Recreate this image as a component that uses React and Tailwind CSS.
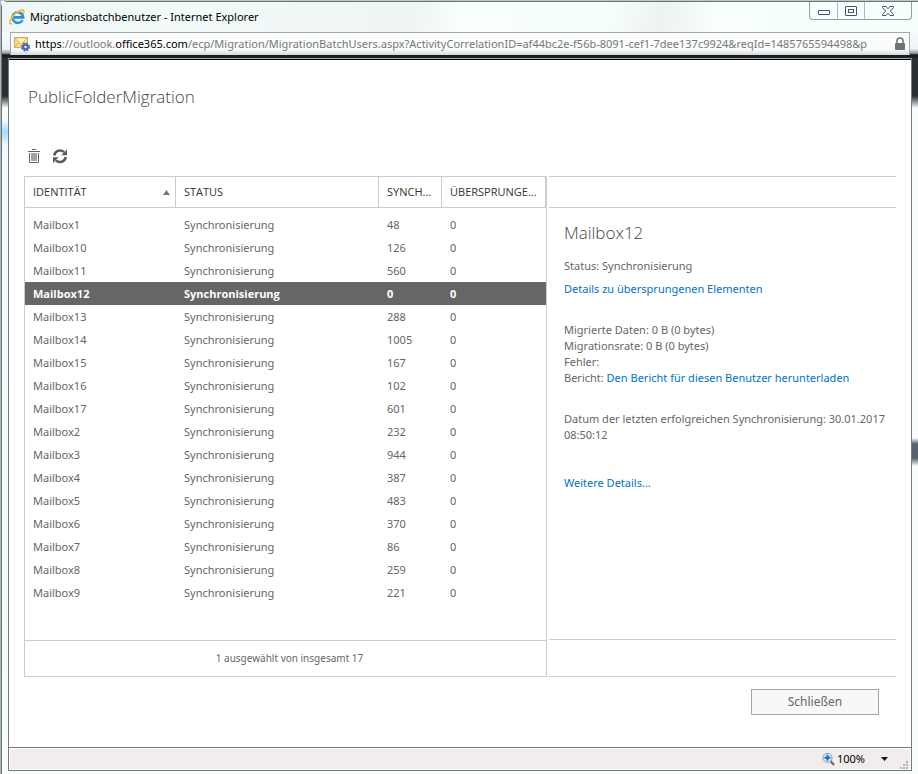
const rows = [
  ["Mailbox1", 48, 0],
  ["Mailbox10", 126, 0],
  ["Mailbox11", 560, 0],
  ["Mailbox12", 0, 0],
  ["Mailbox13", 288, 0],
  ["Mailbox14", 1005, 0],
  ["Mailbox15", 167, 0],
  ["Mailbox16", 102, 0],
  ["Mailbox17", 601, 0],
  ["Mailbox2", 232, 0],
  ["Mailbox3", 944, 0],
  ["Mailbox4", 387, 0],
  ["Mailbox5", 483, 0],
  ["Mailbox6", 370, 0],
  ["Mailbox7", 86, 0],
  ["Mailbox8", 259, 0],
  ["Mailbox9", 221, 0],
];

function BrowserIcon() {
  return (
    <svg className="size-4 shrink-0" viewBox="0 0 16 16" fill="none" aria-hidden="true">
      <path d="M13.6 11a5.3 5.3 0 1 1 .6-2.6H5" stroke="#2a8fd6" strokeWidth="2.6" />
      <path d="M13 10.6a4.8 4.8 0 0 1-8.6-1" stroke="#6cc4f2" strokeWidth="0.8" />
      <path d="M2.6 14.8C.6 15.2.2 13.4 1.6 10.6 3.6 6.4 9 1.4 13 1c2-.2 2.2 1.4 1.4 3.2" stroke="#f0b323" strokeWidth="1.5" strokeLinecap="round" />
      <path d="M2 10.8C4 7 8.8 2.4 12.6 1.4" stroke="#fbe08a" strokeWidth="0.6" />
    </svg>
  );
}

function MailGearIcon() {
  return (
    <svg className="size-4 shrink-0" viewBox="0 0 16 16" fill="none" aria-hidden="true">
      <rect x="0.5" y="1.5" width="13" height="10" fill="#f9dc85" stroke="#d6ac55" />
      <path d="M.5 11.5 5 6.500M13.5 11.5 9 6.500" stroke="#d6ac55" />
      <path d="M1 2h12L7 8Z" fill="#fff6cf" stroke="#d6ac55" strokeWidth="0.800" />
      <circle cx="11.500" cy="11" r="3.700" stroke="#3c5ba6" strokeWidth="1.600" strokeDasharray="1.700 1.200" />
      <circle cx="11.500" cy="11" r="2.300" fill="#dfe8fa" stroke="#4667b4" strokeWidth="2" />
    </svg>
  );
}

function LockIcon() {
  return (
    <svg className="h-[14px] w-[12px] shrink-0" viewBox="0 0 12 14" fill="none" aria-hidden="true">
      <path d="M3 7V4a3 3 0 0 1 6 0v3" stroke="#737373" strokeWidth="1.6" />
      <rect x="1" y="6" width="10" height="7" rx="0.8" fill="#737373" />
    </svg>
  );
}

function WindowButtons() {
  return (
    <div className="mr-[6px] flex h-[18px] w-[103px] self-start rounded-b-[4px] border border-t-0 border-[#959c9c]">
      <button aria-label="Minimieren" className="flex w-[28px] items-center justify-center border-r border-[#b3baba]">
        <svg className="h-[14px] w-[14px]" viewBox="0 0 14 14" aria-hidden="true">
          <rect x="1.5" y="6.5" width="11" height="4" rx="0.5" fill="#fff" stroke="#4c5066" />
        </svg>
      </button>
      <button aria-label="Maximieren" className="flex w-[27px] items-center justify-center border-r border-[#b3baba]">
        <svg className="h-[14px] w-[14px]" viewBox="0 0 14 14" fill="#fff" stroke="#4c5066" aria-hidden="true">
          <rect x="1.5" y="2.5" width="11" height="9" rx="0.5" />
          <rect x="4.5" y="5.5" width="5" height="3" />
        </svg>
      </button>
      <button aria-label="Fenster schließen" className="flex flex-1 items-center justify-center">
        <svg className="h-[14px] w-[14px]" viewBox="0 0 14 14" aria-hidden="true">
          <path d="M1.5 2.5h3.5l2 2.300 2-2.300h3.500v1L9.300 7l3.200 3.500v1H9L7 9.200l-2 2.300H1.500v-1L4.700 7 1.500 3.500Z" fill="#fff" stroke="#4c5066" />
        </svg>
      </button>
    </div>
  );
}

function TrashIcon() {
  return (
    <svg className="h-4 w-[14px]" viewBox="0 0 14 16" fill="none" stroke="#666" aria-hidden="true">
      <path d="M5 1.500h4M1 3.500h12" />
      <path d="M2.500 5v9.500h9V5" />
      <path d="M5 5v8M7 5v8M9 5v8" strokeWidth="1.200" />
    </svg>
  );
}

function RefreshIcon() {
  return (
    <svg className="size-4" viewBox="0 0 16 16" aria-hidden="true">
      <path d="M2.300 7.500A5.700 5.700 0 0 1 12 4.200M13.700 9A5.700 5.700 0 0 1 4 12.300" stroke="#5c5c5c" strokeWidth="2.600" fill="none" />
      <path d="M15 1.500v5.700H9.300ZM1 15V9.300h5.700Z" fill="#5c5c5c" />
    </svg>
  );
}

function ZoomIcon() {
  return (
    <svg className="h-[14px] w-[13px]" viewBox="0 0 13 14" fill="none" aria-hidden="true">
      <path d="m8.500 9 3.500 4" stroke="#8a5f4a" strokeWidth="2.200" />
      <circle cx="5.500" cy="5.800" r="4.500" fill="#e2f2fd" stroke="#7d9cba" />
      <path d="M5.500 2.800v6M2.500 5.800h6" stroke="#1c62c8" strokeWidth="2" />
    </svg>
  );
}

const heading = "font-['Open_Sans',sans-serif] font-light text-[#444] text-[17px]";
const cell = "h-[23px] p-0 pt-[2px] pl-2 text-left";
const headCell = "h-[31px] border-r border-b border-[#c5ced2] p-0 pl-2 text-left font-normal";
const link = "text-[#0072c6]";

function MailboxList() {
  return (
    <section className="flex min-w-0 flex-1 flex-col border border-[#c5ced2]">
      <table className="w-full table-fixed border-separate border-spacing-0">
        <colgroup>
          <col className="w-[151px]" />
          <col />
          <col className="w-[63px]" />
          <col className="w-[104px]" />
        </colgroup>
        <thead className="font-['Open_Sans',sans-serif] text-[#333]">
          <tr>
            <th scope="col" aria-sort="ascending" className={headCell}>
              <span className="flex items-center justify-between pr-[5px]">
                IDENTITÄT
                <svg className="h-[5px] w-[7px]" viewBox="0 0 7 5" aria-hidden="true">
                  <path d="M3.500 0 7 5H0Z" fill="#7d6f7d" />
                </svg>
              </span>
            </th>
            <th scope="col" className={headCell}>STATUS</th>
            <th scope="col" className={headCell}>SYNCH...</th>
            <th scope="col" className={headCell}>ÜBERSPRUNGE...</th>
          </tr>
        </thead>
        <tbody className="before:block before:h-[5px]">
          {rows.map(([name, synced, skipped]) => (
            <tr key={name} className={name === "Mailbox12" ? "bg-[#666] font-['Open_Sans',sans-serif] font-bold text-white" : ""}>
              <td className={cell}>{name}</td>
              <td className={cell}>Synchronisierung</td>
              <td className={cell}>{synced}</td>
              <td className={cell}>{skipped}</td>
            </tr>
          ))}
        </tbody>
      </table>
      <div className="mt-auto flex h-[36px] items-center justify-center border-t border-[#c5ced2] pl-2 text-[10px]">
        1 ausgewählt von insgesamt 17
      </div>
    </section>
  );
}

function Details() {
  return (
    <aside className="flex w-[347px] shrink-0 flex-col border-y border-[#c5ced2] leading-4">
      <div className="h-[31px] border-b border-[#c5ced2]" />
      <div className="flex flex-1 flex-col items-start pt-[13px] pl-[15px]">
        <h2 className={heading + " leading-6"}>Mailbox12</h2>
        <p className="mt-[13px]">Status: Synchronisierung</p>
        <a href="#skipped" className={link + " mt-[7px]"}>Details zu übersprungenen Elementen</a>
        <div className="mt-[25px]">
          <p>Migrierte Daten: 0 B (0 bytes)</p>
          <p>Migrationsrate: 0 B (0 bytes)</p>
          <p>Fehler:</p>
          <p>
            Bericht: <a href="#report" className={link}>Den Bericht für diesen Benutzer herunterladen</a>
          </p>
        </div>
        <p className="mt-[25px]">
          Datum der letzten erfolgreichen Synchronisierung: 30.01.2017 08:50:12
        </p>
        <a href="#more" className={link + " mt-8"}>Weitere Details...</a>
      </div>
      <div className="h-[37px] border-t border-[#c5ced2]" />
    </aside>
  );
}

export default function App() {
  return (
    <div className="flex min-h-screen flex-col border-t border-l border-t-[#b9c9c2] border-l-[#b4b4b4] bg-[#fafcfc] font-['Noto_Sans','Open_Sans',sans-serif] text-[11px] text-[#666]">
      <div className="flex flex-1 flex-col rounded-tl-[6px] border-t border-l border-[#6a7470]">
        <header className="flex h-[30px] items-center justify-between bg-[linear-gradient(100deg,#eef6f6_0%,#f3fafa_20%,#eff4f4_45%,#f8fffe_50%,#f6fefd_66%,#edf2f2_72%,#f8fffe_78%,#f5fffd_100%)] pl-[7px]">
          <div className="flex items-center gap-[5px] text-black">
            <BrowserIcon />
            <h1>Migrationsbatchbenutzer - Internet Explorer</h1>
          </div>
          <WindowButtons />
        </header>

        <div className="bg-[linear-gradient(#f6fcfc_0%,#eef4f6_65%,#8d959c_82%,#17191c_88%,#23272b_100%)] pr-2 pb-[3px] pl-2">
          <div className="flex h-[23px] items-center gap-[5px] border border-b-0 border-[#a3a9a9] bg-linear-to-b from-[#fbfdfd] from-75% to-[#d3d9de] pr-[3px] pl-[3px]">
            <MailGearIcon />
            <p className="min-w-0 flex-1 overflow-hidden whitespace-nowrap text-[#777]">
              <span className="text-black">https</span>://outlook.<span className="text-black">office365.com</span>/ecp/Migration/MigrationBatchUsers.aspx?ActivityCorrelationID=af44bc2e-f56b-8091-cef1-7dee137c9924&amp;reqId=1485765594498&amp;p
            </p>
            <LockIcon />
          </div>
        </div>

        <div className="flex flex-1 bg-[linear-gradient(#2b2f33_0px,#2b2f33_38px,#f8fcfc_50px,#f0fbff_62px,#9fdcff_74px,#f0fbff_88px,#f8fcfc_100%),linear-gradient(#2b2f33_0px,#2b2f33_38px,#f8fcfc_50px,#f8fcfc_380px,#56626e_386px,#56626e_400px,#f8fcfc_408px)] bg-[size:50%_100%] bg-[position:left,right] bg-no-repeat pr-[6px] pb-[3px] pl-[6px]">
          <div className="flex min-w-0 flex-1 flex-col border border-[#777] border-t-[#a5a5a5] bg-white">
            <main className="flex flex-1 flex-col border-t border-black px-[15px] pt-6">
              <h2 className={heading + " pl-1 leading-[26px]"}>PublicFolderMigration</h2>
              <div className="mt-[38px] flex h-4 gap-[11px] pl-[3px]">
                <button aria-label="Löschen"><TrashIcon /></button>
                <button aria-label="Aktualisieren"><RefreshIcon /></button>
              </div>
              <div className="mt-3 flex flex-1 gap-[2px]">
                <MailboxList />
                <Details />
              </div>
              <div className="mt-3 mb-8 flex justify-end pr-[17px]">
                <button className="h-[26px] w-[128px] border border-[#99a8a8] bg-[#f8f8f8] text-[12px]">Schließen</button>
              </div>
            </main>
            <footer className="flex h-[23px] items-center justify-end border-t border-[#777]">
              <div className="flex h-[22px] flex-1 items-center justify-end border border-white bg-[#f0edec] pr-[2px] text-black">
                <button className="flex items-center gap-[2px]">
                  <ZoomIcon />
                  100%
                  <svg className="ml-[14px] h-1 w-[7px]" viewBox="0 0 7 4" aria-hidden="true">
                    <path d="M0 0h7L3.500 4Z" fill="#111" />
                  </svg>
                </button>
                <svg className="ml-3 h-2 w-2 self-end" viewBox="0 0 8 8" fill="#b8b4b2" aria-hidden="true">
                  <path d="M6 0h2v2H6zM3 3h2v2H3zM6 3h2v2H6zM0 6h2v2H0zM3 6h2v2H3zM6 6h2v2H6z" />
                </svg>
              </div>
            </footer>
          </div>
        </div>
      </div>
    </div>
  );
}
